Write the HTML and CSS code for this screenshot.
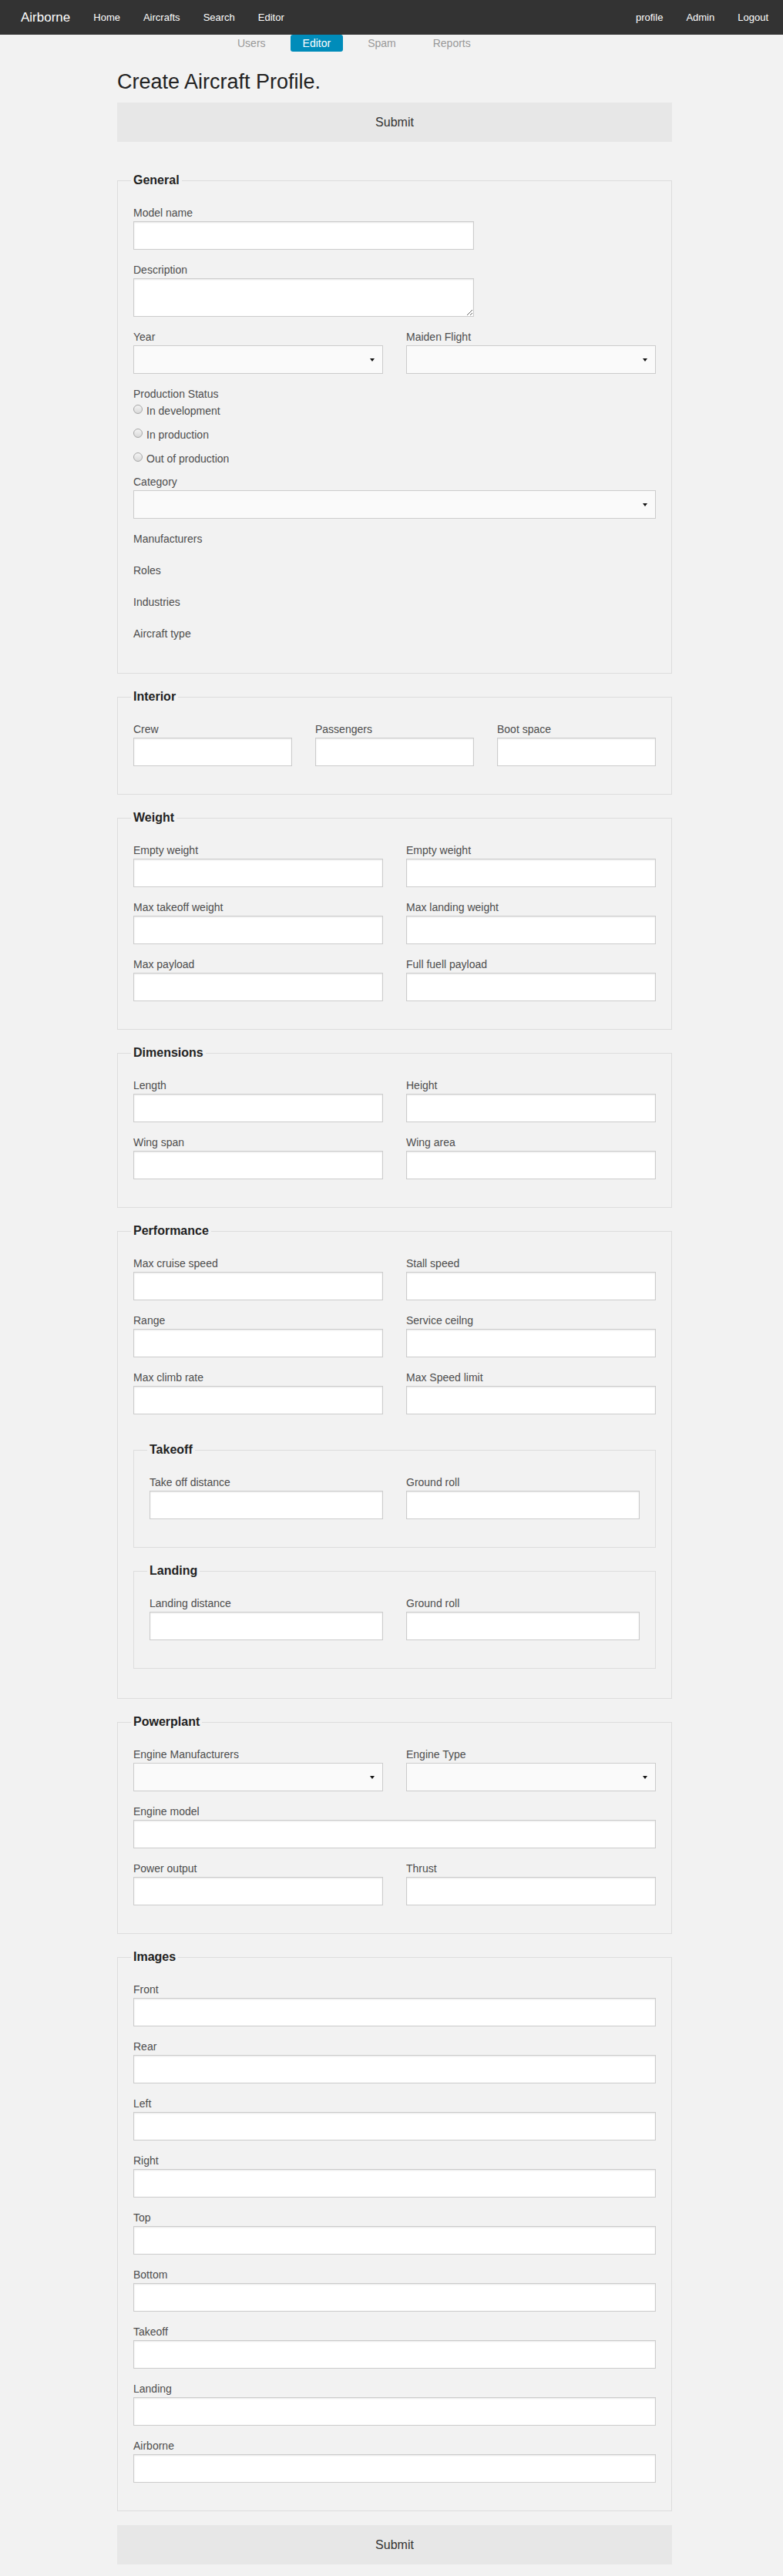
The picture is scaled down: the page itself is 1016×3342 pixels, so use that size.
FILE: index.html
```html
<!DOCTYPE html>
<html lang="en">
<head>
<meta charset="utf-8">
<title>Create Aircraft Profile</title>
<link rel="stylesheet" href="styles.css">
</head>
<body>
<nav class="topbar">
  <a class="brand" href="#">Airborne</a>
  <ul class="nav-links">
    <li><a href="#">Home</a></li>
    <li><a href="#">Aircrafts</a></li>
    <li><a href="#">Search</a></li>
    <li><a href="#">Editor</a></li>
  </ul>
  <ul class="nav-links nav-right">
    <li><a href="#">profile</a></li>
    <li><a href="#">Admin</a></li>
    <li><a href="#">Logout</a></li>
  </ul>
</nav>

<div class="subnav">
  <a href="#" class="tab">Users</a>
  <a href="#" class="tab active">Editor</a>
  <a href="#" class="tab">Spam</a>
  <a href="#" class="tab">Reports</a>
</div>

<main class="page">
  <h1 class="title">Create Aircraft Profile.</h1>
  <form>
    <button type="button" class="submit">Submit</button>

    <fieldset>
      <legend>General</legend>
      <div class="field w8"><label>Model name</label><input class="input" type="text"></div>
      <div class="field w8"><label>Description</label><textarea class="input textarea"></textarea></div>
      <div class="row2">
        <div class="field"><label>Year</label><div class="select-wrap"><select class="select"><option></option></select></div></div>
        <div class="field"><label>Maiden Flight</label><div class="select-wrap"><select class="select"><option></option></select></div></div>
      </div>
      <div class="radio-group">
        <label>Production Status</label>
        <div class="radio-row"><input type="radio" name="ps" class="radio"><span>In development</span></div>
        <div class="radio-row"><input type="radio" name="ps" class="radio"><span>In production</span></div>
        <div class="radio-row"><input type="radio" name="ps" class="radio"><span>Out of production</span></div>
      </div>
      <div class="field"><label>Category</label><div class="select-wrap"><select class="select"><option></option></select></div></div>
      <div class="field empty"><label>Manufacturers</label></div>
      <div class="field empty"><label>Roles</label></div>
      <div class="field empty"><label>Industries</label></div>
      <div class="field empty"><label>Aircraft type</label></div>
    </fieldset>

    <fieldset>
      <legend>Interior</legend>
      <div class="row3">
        <div class="field"><label>Crew</label><input class="input" type="text"></div>
        <div class="field"><label>Passengers</label><input class="input" type="text"></div>
        <div class="field"><label>Boot space</label><input class="input" type="text"></div>
      </div>
    </fieldset>

    <fieldset>
      <legend>Weight</legend>
      <div class="row2">
        <div class="field"><label>Empty weight</label><input class="input" type="text"></div>
        <div class="field"><label>Empty weight</label><input class="input" type="text"></div>
        <div class="field"><label>Max takeoff weight</label><input class="input" type="text"></div>
        <div class="field"><label>Max landing weight</label><input class="input" type="text"></div>
        <div class="field"><label>Max payload</label><input class="input" type="text"></div>
        <div class="field"><label>Full fuell payload</label><input class="input" type="text"></div>
      </div>
    </fieldset>

    <fieldset>
      <legend>Dimensions</legend>
      <div class="row2">
        <div class="field"><label>Length</label><input class="input" type="text"></div>
        <div class="field"><label>Height</label><input class="input" type="text"></div>
        <div class="field"><label>Wing span</label><input class="input" type="text"></div>
        <div class="field"><label>Wing area</label><input class="input" type="text"></div>
      </div>
    </fieldset>

    <fieldset>
      <legend>Performance</legend>
      <div class="row2">
        <div class="field"><label>Max cruise speed</label><input class="input" type="text"></div>
        <div class="field"><label>Stall speed</label><input class="input" type="text"></div>
        <div class="field"><label>Range</label><input class="input" type="text"></div>
        <div class="field"><label>Service ceilng</label><input class="input" type="text"></div>
        <div class="field"><label>Max climb rate</label><input class="input" type="text"></div>
        <div class="field"><label>Max Speed limit</label><input class="input" type="text"></div>
      </div>
      <fieldset>
        <legend>Takeoff</legend>
        <div class="row2">
          <div class="field"><label>Take off distance</label><input class="input" type="text"></div>
          <div class="field"><label>Ground roll</label><input class="input" type="text"></div>
        </div>
      </fieldset>
      <fieldset>
        <legend>Landing</legend>
        <div class="row2">
          <div class="field"><label>Landing distance</label><input class="input" type="text"></div>
          <div class="field"><label>Ground roll</label><input class="input" type="text"></div>
        </div>
      </fieldset>
    </fieldset>

    <fieldset>
      <legend>Powerplant</legend>
      <div class="row2">
        <div class="field"><label>Engine Manufacturers</label><div class="select-wrap"><select class="select"><option></option></select></div></div>
        <div class="field"><label>Engine Type</label><div class="select-wrap"><select class="select"><option></option></select></div></div>
      </div>
      <div class="field"><label>Engine model</label><input class="input" type="text"></div>
      <div class="row2">
        <div class="field"><label>Power output</label><input class="input" type="text"></div>
        <div class="field"><label>Thrust</label><input class="input" type="text"></div>
      </div>
    </fieldset>

    <fieldset>
      <legend>Images</legend>
      <div class="field"><label>Front</label><input class="input" type="text"></div>
      <div class="field"><label>Rear</label><input class="input" type="text"></div>
      <div class="field"><label>Left</label><input class="input" type="text"></div>
      <div class="field"><label>Right</label><input class="input" type="text"></div>
      <div class="field"><label>Top</label><input class="input" type="text"></div>
      <div class="field"><label>Bottom</label><input class="input" type="text"></div>
      <div class="field"><label>Takeoff</label><input class="input" type="text"></div>
      <div class="field"><label>Landing</label><input class="input" type="text"></div>
      <div class="field"><label>Airborne</label><input class="input" type="text"></div>
    </fieldset>

    <button type="button" class="submit last">Submit</button>
  </form>
</main>
</body>
</html>
```

FILE: styles.css
```css
html, body {
  margin: 0;
  padding: 0;
}

body {
  background: #f2f2f2;
  font-family: "Liberation Sans", Arial, Helvetica, sans-serif;
  color: #222;
}

/* ---------- top bar ---------- */
.topbar {
  display: flex;
  align-items: center;
  height: 45px;
  background: #333;
  padding: 0 4px 0 12px;
}

.brand {
  padding: 0 15px;
  font-size: 17px;
  color: #fff;
  text-decoration: none;
}

.nav-links {
  display: flex;
  list-style: none;
  margin: 0;
  padding: 0;
}

.nav-links a {
  display: block;
  padding: 0 15px;
  font-size: 13px;
  line-height: 45px;
  color: #fff;
  text-decoration: none;
}

.nav-right {
  margin-left: auto;
}

/* ---------- sub navigation ---------- */
.subnav {
  display: flex;
  gap: 16px;
  margin-left: 292px;
}

.tab {
  display: block;
  padding: 3px 16px;
  font-size: 14px;
  line-height: 16px;
  color: #999;
  text-decoration: none;
  border-radius: 3px;
}

.tab.active {
  background: #008cba;
  color: #fff;
}

/* ---------- page ---------- */
.page {
  width: 720px;
  margin-left: 152px;
}

.title {
  margin: 21px 0 9px;
  font-size: 27px;
  line-height: 36px;
  font-weight: normal;
  color: #222;
}

.submit {
  display: block;
  width: 100%;
  height: 51px;
  margin: 0 0 38px;
  padding: 0;
  border: 0;
  background: #e7e7e7;
  color: #333;
  font-family: inherit;
  font-size: 16px;
}

.submit.last {
  margin-bottom: 15px;
}

fieldset {
  margin: 18px 0;
  padding: 20px;
  border: 1px solid #ddd;
  min-width: 0;
}

legend {
  margin-left: -3px;
  padding: 0 3px;
  font-size: 16px;
  line-height: 24px;
  font-weight: bold;
  color: #222;
}

.field {
  margin-bottom: 16px;
}

.field.empty {
  margin-bottom: 20px;
}

.w8 {
  width: 442px;
}

label {
  display: block;
  font-size: 14px;
  line-height: 21px;
  color: #4d4d4d;
}

.input {
  display: block;
  box-sizing: border-box;
  width: 100%;
  height: 37px;
  margin: 0;
  padding: 8px;
  border: 1px solid #ccc;
  border-radius: 0;
  background: #fff;
  box-shadow: inset 0 1px 2px rgba(0, 0, 0, 0.1);
  font-family: inherit;
  font-size: 14px;
  color: #222;
}

.textarea {
  height: 50px;
}

.row2 {
  display: grid;
  grid-template-columns: 1fr 1fr;
  column-gap: 30px;
}

.row3 {
  display: grid;
  grid-template-columns: 1fr 1fr 1fr;
  column-gap: 30px;
}

/* select */
.select-wrap {
  position: relative;
}

.select-wrap::after {
  content: "";
  position: absolute;
  right: 11px;
  top: 50%;
  margin-top: -2px;
  border-left: 3px solid transparent;
  border-right: 3px solid transparent;
  border-top: 4px solid #111;
  pointer-events: none;
}

.select {
  display: block;
  box-sizing: border-box;
  width: 100%;
  height: 37px;
  margin: 0;
  padding: 8px;
  border: 1px solid #ccc;
  border-radius: 0;
  background: #fafafa;
  -webkit-appearance: none;
  appearance: none;
  font-family: inherit;
  font-size: 14px;
}

/* radios */
.radio-group {
  margin-bottom: 0;
}

.radio-row {
  display: flex;
  align-items: center;
  height: 21px;
  margin-bottom: 10px;
  font-size: 14px;
  color: #4d4d4d;
}

.radio {
  -webkit-appearance: none;
  appearance: none;
  box-sizing: border-box;
  width: 12px;
  height: 12px;
  margin: -3px 5px 0 0;
  border: 1px solid #a6a6a6;
  border-radius: 50%;
  background: linear-gradient(#f4f4f4, #d9d9d9);
}
```
